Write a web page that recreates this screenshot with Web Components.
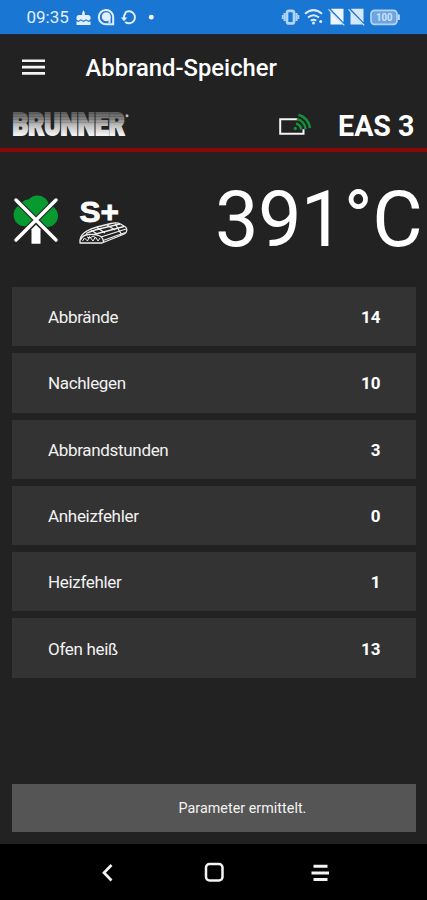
<!DOCTYPE html>
<html lang="de">
<head>
<meta charset="UTF-8">
<meta name="viewport" content="width=device-width, initial-scale=1.0">
<title>Abbrand-Speicher</title>
<style>
    body {
        margin: 0;
        background: #222222;
        color: #ffffff;
        font-family: Roboto, "Liberation Sans", sans-serif;
    }
</style>
</head>
<body>
<burn-app></burn-app>

<script>
class StatusBar extends HTMLElement {
    constructor() {
        super();
        this.attachShadow({ mode: 'open' });
    }

    connectedCallback() {
        this.shadowRoot.innerHTML = `
            <style>
                :host {
                    display: flex;
                    justify-content: space-between;
                    height: 34px;
                    box-sizing: border-box;
                    padding-left: 26.5px;
                    background: #1976d2;
                    color: #e3efff;
                }
                .time {
                    font-size: 17px;
                    line-height: 35px;
                    width: 48px;
                }
                .left { display: flex; }
                svg { display: block; }
            </style>
            <div class="left">
                <span class="time">09:35</span>
                <svg width="84" height="34" viewBox="74.5 0 84 34" fill="none" stroke="#e3efff">
                    <path d="M76 17.5q0-2.5 2.500-2.500h3.200v-2.500l1.300-2.300 1.300 2.300v2.500h3.200q2.500 0 2.500 2.500v1.800l-2 1.400-2.300-1.500-2.700 1.600-2.700-1.600-2.300 1.500-2-1.200z" fill="#e3efff" stroke="none"/>
                    <path d="M76 21.200l2 .7 2.300-1.300 2.700 1.500 2.700-1.500 2.300 1.300 2-.7v3.800h-14z" fill="#e3efff" stroke="none"/>
                    <path d="M112.700 24.300h-6.700a7.200 7.200 0 1 1 6.700-7.200z" stroke-width="2"/>
                    <circle cx="105.800" cy="16.800" r="4.500" fill="#e3efff" stroke="none"/>
                    <path d="M109 17v6" stroke-width="2"/>
                    <path d="M124.500 12.800a6 6 0 1 1 .2 9.200" stroke-width="1.900"/>
                    <path d="M120.300 17.500h6.500l-3.200 3.800z" fill="#e3efff" stroke="none"/>
                    <path d="M123.300 18q0-3 2-5" stroke-width="1.900"/>
                    <circle cx="150.800" cy="17.200" r="2.400" fill="#fff" stroke="none"/>
                </svg>
            </div>
            <svg width="147" height="34" viewBox="280 0 147 34" fill="none" stroke="#dceaff">
                <rect x="287" y="10.800" width="7" height="12.600" rx="2" stroke-width="2.700" stroke="#b4d4f6"/>
                <path d="M284.600 13v8M296.500 13v8" stroke="#b4d4f6" stroke-width="2.200"/>
                <path d="M282.700 15v4M298.400 15v4" stroke="#b4d4f6" stroke-width="1.800"/>
                <path d="M305 13.700q8.500-7.200 17 0M308 17.500q5.500-4.500 11 0M310.800 20.800q2.700-2 5.400 0" stroke-width="2"/>
                <circle cx="313.500" cy="23" r="1.500" fill="#dceaff" stroke="none"/>
                <circle cx="320.700" cy="21.500" r="1.500" fill="#dceaff" stroke="none"/>
                <path d="M334 8.800h9.500v13.400l-12.800-13.400zM330.500 11.800l12.300 12.800h-12.300z" fill="#edf5ff" stroke="none"/>
                <path d="M328.500 9.300l15.800 16" stroke-width="1.100"/>
                <g transform="translate(20 0)">
                    <path d="M334 8.800h9.500v13.400l-12.800-13.400zM330.500 11.800l12.300 12.800h-12.300z" fill="#d8e8fb" stroke="none"/>
                    <path d="M328.500 9.300l15.800 16" stroke-width="1.100"/>
                </g>
                <rect x="371" y="10.300" width="26" height="14" rx="3.500" fill="#6ca5e0" stroke="#b4d2f3" stroke-width="1.700"/>
                <path d="M398.800 14.500v5.500" stroke="#c7ddf7" stroke-width="2"/>
                <text x="376" y="21.300" textLength="16.500" lengthAdjust="spacingAndGlyphs" font-size="10.500" font-weight="700" fill="#cfe3fa" stroke="none">100</text>
            </svg>
        `;
    }
}

class AppHeader extends HTMLElement {
    constructor() {
        super();
        this.attachShadow({ mode: 'open' });
    }

    connectedCallback() {
        this.shadowRoot.innerHTML = `
            <style>
                :host {
                    display: flex;
                    align-items: center;
                    height: 67px;
                    padding-left: 22px;
                    border-top: 1px solid #1d2b38;
                    box-sizing: border-box;
                }
                svg { margin-right: 40.500px; }
                h1 {
                    margin: 0;
                    font-size: 23.800px;
                    font-weight: 500;
                    line-height: 30px;
                    white-space: nowrap;
                }
            </style>
            <svg width="23" height="18" viewBox="0 0 23 18" stroke="#f4f4f4" stroke-width="2.600">
                <path d="M0 1.800h23M0 8.100h23M0 14.400h23"/>
            </svg>
            <h1><slot></slot></h1>
        `;
    }
}

class BrandBar extends HTMLElement {
    constructor() {
        super();
        this.attachShadow({ mode: 'open' });
    }

    connectedCallback() {
        this.shadowRoot.innerHTML = `
            <style>
                :host {
                    display: flex;
                    align-items: center;
                    height: 51px;
                    box-sizing: border-box;
                    border-bottom: 4px solid #8b0808;
                    padding: 0 12.500px 0 11px;
                }
                svg { display: block; overflow: visible; }
                .link { margin-left: auto; }
                .model {
                    margin-left: 26px;
                    font-size: 28.600px;
                    font-weight: 700;
                    line-height: 34px;
                    padding-top: 3px;
                }
            </style>
            <svg width="120" height="47" viewBox="11 101 120 47">
                <defs>
                    <linearGradient id="metal" gradientUnits="userSpaceOnUse" x1="0" y1="-24" x2="0" y2="0">
                        <stop offset="0" stop-color="#555555"/>
                        <stop offset=".3" stop-color="#7c7c7c"/>
                        <stop offset=".6" stop-color="#bcbcbc"/>
                        <stop offset="1" stop-color="#f2f2f2"/>
                    </linearGradient>
                </defs>
                <text transform="translate(12.500 134.800) scale(.79 1)" textLength="142" lengthAdjust="spacingAndGlyphs" font-size="31.500" font-weight="900" fill="url(#metal)" stroke="url(#metal)" stroke-width="2">BRUNNER</text>
                <path d="M11 113.500h115M11 116.500h115M11 119.500h115M11 122.500h115" stroke="#222" stroke-opacity=".2" stroke-width=".8"/>
                <circle cx="127" cy="115.800" r="1.500" fill="#bbb"/>
            </svg>
            <svg class="link" width="33" height="47" viewBox="280 101 33 47" fill="none">
                <path d="M298.500 119.200h-17.300v14.600h23.300v-4.500" stroke="#f5f5f5" stroke-width="2"/>
                <g stroke="#16913a" stroke-width="2.500">
                    <path d="M297 123.500a7 7 0 0 1 5.200 6M297.800 119a11 11 0 0 1 8.700 10M299.500 114.700a15.500 15.500 0 0 1 11.500 13.300"/>
                    <circle cx="296.300" cy="128.500" r="1.700" fill="#16913a" stroke="none"/>
                </g>
            </svg>
            <span class="model"><slot></slot></span>
        `;
    }
}

class StoveReadout extends HTMLElement {
    constructor() {
        super();
        this.attachShadow({ mode: 'open' });
    }

    connectedCallback() {
        this.shadowRoot.innerHTML = `
            <style>
                :host {
                    display: flex;
                    justify-content: space-between;
                    align-items: center;
                    height: 135px;
                    box-sizing: border-box;
                    padding: 0 5px 0 10px;
                }
                .temp {
                    font-size: 77.500px;
                    line-height: 90px;
                    letter-spacing: -.6px;
                    white-space: nowrap;
                }
            </style>
            <svg width="120" height="66" viewBox="10 186 120 66" fill="none">
                <g fill="#079a31">
                    <circle cx="24.800" cy="214" r="11.200"/>
                    <circle cx="37.500" cy="206" r="11.500"/>
                    <circle cx="47" cy="215" r="11"/>
                    <circle cx="28" cy="205.500" r="7"/>
                    <path d="M24 209h24v16h-24z"/>
                </g>
                <path d="M30.500 243v-16l5.500-7 5.500 7v16z" fill="#222"/>
                <path d="M16 199l40 40M56 199l-40 40" stroke="#222" stroke-width="5.500" stroke-linecap="round"/>
                <path d="M16 199l40 40M56 199l-40 40" stroke="#fff" stroke-width="3.500" stroke-linecap="round"/>
                <path d="M31.500 242.700v-14.500l4.500-4.500 4.500 4.500v14.500z" fill="#fff"/>
                <text x="79.500" y="220.500" font-family="Liberation Sans, sans-serif" font-weight="700" font-size="30" textLength="39.500" lengthAdjust="spacingAndGlyphs" fill="#fff" stroke="#fff" stroke-width=".8">S+</text>
                <g stroke="#efefef" stroke-width="1.300" stroke-linejoin="round">
                    <path d="M80 242v-3q.5-5 6-8.500 5-3 11-4.500l14-3.500q6-1.300 9.500.5l5 3q1.500 1 1.300 3.500-.3 2.500-2.500 3.500l-22.300 9z"/>
                    <path d="M80.500 239q2-5 8-5.500 7-.8 11.500 1.500 3.500 2 3.500 7"/>
                    <path d="M86 232.500q7-3.500 17-5.500l17-4M94 233.500l30-8M101 236l25-8M103 239.500l22.500-8"/>
                    <path d="M97 226.500l8 5.500M107 224l8 5M115 222.500l6.500 11M91 229l6 4"/>
                    <path d="M82.500 240l2-3 3 3 2-4.500 3.500 4.500 2.500-4 2.500 4 2-3M87 236l3 1 3-2 3 2" stroke-width="1"/>
                </g>
            </svg>
            <div class="temp"><slot></slot></div>
        `;
    }
}

class StatRow extends HTMLElement {
    constructor() {
        super();
        this.attachShadow({ mode: 'open' });
    }

    connectedCallback() {
        this.shadowRoot.innerHTML = `
            <style>
                :host {
                    display: flex;
                    justify-content: space-between;
                    align-items: center;
                    height: 59.300px;
                    box-sizing: border-box;
                    padding: 1px 35.500px 0 36px;
                    background: #333333;
                    font-size: 17px;
                    line-height: 22px;
                }
                .label {
                    color: #f2f2f2;
                    letter-spacing: -.32px;
                }
                .value { font-weight: 700; }
            </style>
            <span class="label"><slot></slot></span>
            <span class="value">${this.getAttribute('value')}</span>
        `;
    }
}

class StatusMessage extends HTMLElement {
    constructor() {
        super();
        this.attachShadow({ mode: 'open' });
    }

    connectedCallback() {
        this.shadowRoot.innerHTML = `
            <style>
                :host {
                    display: block;
                    height: 48px;
                    box-sizing: border-box;
                    padding-left: 166.500px;
                    background: #555555;
                    color: #f2f2f2;
                    font-size: 14.300px;
                    letter-spacing: .04px;
                    line-height: 49px;
                }
            </style>
            <slot></slot>
        `;
    }
}

class NavBar extends HTMLElement {
    constructor() {
        super();
        this.attachShadow({ mode: 'open' });
    }

    connectedCallback() {
        this.shadowRoot.innerHTML = `
            <style>
                :host {
                    display: flex;
                    justify-content: center;
                    align-items: center;
                    gap: 82.500px;
                    height: 56px;
                    background: #000000;
                }
            </style>
            <svg width="24" height="24" fill="none" stroke="#f4f4f4" stroke-width="2.700"><path d="M16.500 5l-7.500 7.800 7.500 7.700"/></svg>
            <svg width="24" height="24" fill="none" stroke="#f4f4f4" stroke-width="2.500"><rect x="4" y="4" width="16.500" height="16.500" rx="3.500"/></svg>
            <svg width="24" height="24" fill="none" stroke="#f4f4f4" stroke-width="3"><path d="M5.500 6.300h14M3.500 13h17.500M5.500 19.500h14"/></svg>
        `;
    }
}

class BurnApp extends HTMLElement {
    constructor() {
        super();
        this.attachShadow({ mode: 'open' });
    }

    connectedCallback() {
        this.shadowRoot.innerHTML = `
            <style>
                :host {
                    display: flex;
                    flex-direction: column;
                    height: 900px;
                    overflow: hidden;
                }
                .stats {
                    display: flex;
                    flex-direction: column;
                    gap: 7px;
                    margin: 0 11px 0 12px;
                }
                status-message { margin: auto 11px 12px 12px; }
            </style>
            <status-bar></status-bar>
            <app-header>Abbrand-Speicher</app-header>
            <brand-bar>EAS 3</brand-bar>
            <stove-readout>391°C</stove-readout>
            <div class="stats">
                <stat-row value="14">Abbrände</stat-row>
                <stat-row value="10">Nachlegen</stat-row>
                <stat-row value="3">Abbrandstunden</stat-row>
                <stat-row value="0">Anheizfehler</stat-row>
                <stat-row value="1">Heizfehler</stat-row>
                <stat-row value="13">Ofen heiß</stat-row>
            </div>
            <status-message>Parameter ermittelt.</status-message>
            <nav-bar></nav-bar>
        `;
    }
}

customElements.define('status-bar', StatusBar);
customElements.define('app-header', AppHeader);
customElements.define('brand-bar', BrandBar);
customElements.define('stove-readout', StoveReadout);
customElements.define('stat-row', StatRow);
customElements.define('status-message', StatusMessage);
customElements.define('nav-bar', NavBar);
customElements.define('burn-app', BurnApp);
</script>
</body>
</html>
